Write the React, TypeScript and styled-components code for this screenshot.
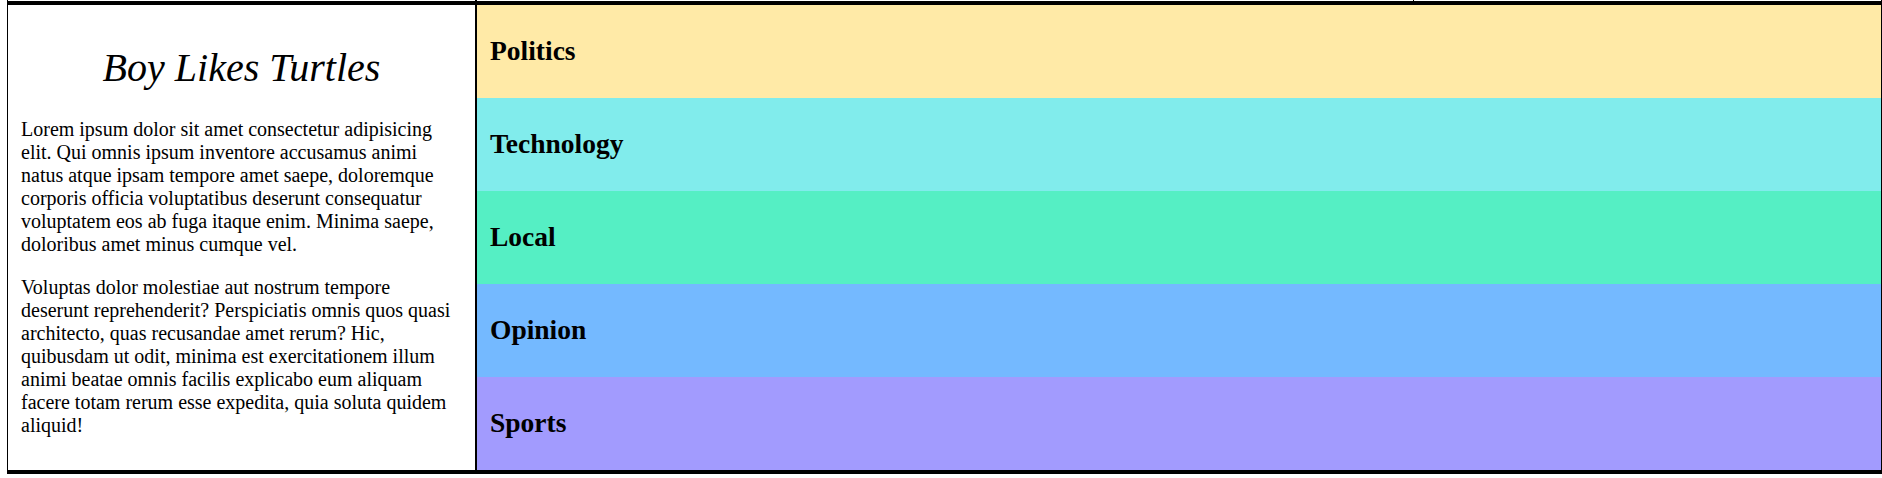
import styled, { createGlobalStyle } from "styled-components";

const GlobalStyle = createGlobalStyle`
  html, body {
    margin: 0;
    padding: 0;
    background: #ffffff;
  }
  body {
    font-family: "Liberation Serif", "Times New Roman", serif;
    color: #000000;
  }
`;

const Page = styled.div`
  margin-left: 7px;
  width: 1875px;
  box-sizing: border-box;
`;

// leftover cell edges of the row above, cut off by the screenshot
const TopStrip = styled.div`
  display: flex;
  height: 1px;
  border-left: 1px solid #000;
  border-right: 1px solid #000;
`;

const StripCell = styled.div<{ $width?: number; $edge?: number }>`
  height: 1px;
  flex: ${(p) => (p.$width ? `0 0 ${p.$width}px` : "1 1 auto")};
  border-right: ${(p) => (p.$edge ? `${p.$edge}px solid #000` : "none")};
`;

const Main = styled.div`
  display: grid;
  grid-template-columns: 469px 1fr;
  border-top: 4px solid #000;
  border-bottom: 4px solid #000;
  border-left: 1px solid #000;
  border-right: 1px solid #000;
`;

const Sidebar = styled.aside`
  padding: 13px;
  border-right: 2px solid #000;
  background: #ffffff;
`;

const Title = styled.h1`
  margin: 26.8px 0;
  font-size: 40px;
  line-height: 46px;
  font-style: italic;
  font-weight: 400;
  text-align: center;
`;

const Text = styled.p`
  margin: 20px 0;
  font-size: 20px;
  line-height: 23px;
`;

const Sections = styled.div`
  display: grid;
  grid-template-rows: repeat(5, 1fr);
`;

const Section = styled.a<{ $bg: string }>`
  display: flex;
  align-items: center;
  padding: 0 13px;
  background: ${(p) => p.$bg};
  color: #000;
  text-decoration: none;
  font-size: 27.5px;
  font-weight: 700;
`;

const sections = [
  { name: "Politics", color: "#ffeaa7" },
  { name: "Technology", color: "#81ecec" },
  { name: "Local", color: "#55efc4" },
  { name: "Opinion", color: "#74b9ff" },
  { name: "Sports", color: "#a29bfe" },
];

const App = () => {
  return (
    <>
      <GlobalStyle />
      <Page>
        <TopStrip>
          <StripCell $width={467} $edge={2} />
          <StripCell $width={936} $edge={1} />
          <StripCell />
        </TopStrip>
        <Main>
          <Sidebar>
            <Title>Boy Likes Turtles</Title>
            <Text>
              Lorem ipsum dolor sit amet consectetur adipisicing elit. Qui omnis
              ipsum inventore accusamus animi natus atque ipsam tempore amet
              saepe, doloremque corporis officia voluptatibus deserunt
              consequatur voluptatem eos ab fuga itaque enim. Minima saepe,
              doloribus amet minus cumque vel.
            </Text>
            <Text>
              Voluptas dolor molestiae aut nostrum tempore deserunt
              reprehenderit? Perspiciatis omnis quos quasi architecto, quas
              recusandae amet rerum? Hic, quibusdam ut odit, minima est
              exercitationem illum animi beatae omnis facilis explicabo eum
              aliquam facere totam rerum esse expedita, quia soluta quidem
              aliquid!
            </Text>
          </Sidebar>
          <Sections>
            {sections.map((s) => (
              <Section key={s.name} href="#" $bg={s.color}>
                {s.name}
              </Section>
            ))}
          </Sections>
        </Main>
      </Page>
    </>
  );
};

export default App;
